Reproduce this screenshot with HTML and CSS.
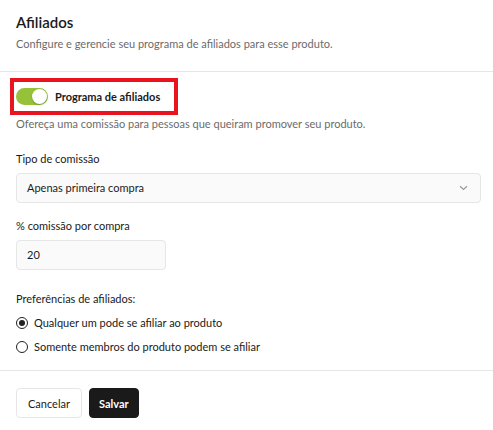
FILE: index.html
```html
<!DOCTYPE html>
<html lang="pt-BR">
    <head>
        <title>Afiliados</title>
        <link rel="stylesheet" href="styles.css">
    </head>
    <body>
        <div class="panel">
            <div class="panel-header">
                <h2>Afiliados</h2>
                <p class="muted">Configure e gerencie seu programa de afiliados para esse produto.</p>
            </div>

            <div class="panel-body">
                <label class="switch-box">
                    <span class="switch"><span class="knob"></span></span>
                    <span class="switch-label">Programa de afiliados</span>
                </label>
                <p class="muted">Ofereça uma comissão para pessoas que queiram promover seu produto.</p>

                <div class="field field-type">
                    <label class="field-label">Tipo de comissão</label>
                    <div class="select">
                        <span>Apenas primeira compra</span>
                        <svg width="9" height="6" viewBox="0 0 9 6"><path d="M1 1.2l3.5 3.3 3.5-3.3" fill="none" stroke="#9a9a9a" stroke-width="1.2"/></svg>
                    </div>
                </div>

                <div class="field field-percent">
                    <label class="field-label">% comissão por compra</label>
                    <div class="input">20</div>
                </div>

                <div class="field field-prefs">
                    <label class="field-label">Preferências de afiliados:</label>
                    <div class="radios">
                        <label class="radio"><span class="dot checked"></span>Qualquer um pode se afiliar ao produto</label>
                        <label class="radio"><span class="dot"></span>Somente membros do produto podem se afiliar</label>
                    </div>
                </div>
            </div>

            <div class="panel-footer">
                <button class="btn">Cancelar</button>
                <button class="btn btn-dark">Salvar</button>
            </div>
        </div>
    </body>
</html>
```
FILE: styles.css
```css
body {
    margin: 0;
    background: #fff;
    font-family: Lato, "Noto Sans", sans-serif;
    font-size: 11px;
    line-height: 16px;
    color: #1a1a1a;
}
.panel-header {
    padding: 12px 16px 19px 16px;
    border-bottom: 1px solid #e6e6e6;
}
.panel-header h2 {
    margin: 0 0 4px 0;
    font-size: 15px;
    line-height: 20px;
    font-weight: 600;
}
.muted {
    margin: 0;
    color: #6b6b6b;
}
.panel-body {
    padding: 6px 12px 15px 16px;
    border-bottom: 1px solid #e6e6e6;
}
.panel-body > .muted {
    margin-top: 1px;
}
.switch-box {
    display: inline-flex;
    align-items: center;
    gap: 7px;
    margin-left: -6px;
    padding: 6px 14px 6px 2px;
    border: 4px solid #e8141f;
}
.switch {
    width: 32px;
    height: 17px;
    background: #96c23a;
    border-radius: 9px;
    position: relative;
    display: inline-block;
}
.knob {
    position: absolute;
    right: 1px;
    top: 1px;
    width: 15px;
    height: 15px;
    border-radius: 50%;
    background: #fff;
    box-shadow: 0 1px 2px rgba(0,0,0,0.25);
}
.switch-label {
    font-weight: 700;
}
.field-type {
    margin-top: 19px;
}
.field-percent {
    margin-top: 15px;
}
.field-prefs {
    margin-top: 21px;
}
.field-label {
    display: block;
    margin-bottom: 6px;
}
.select, .input {
    display: flex;
    align-items: center;
    justify-content: space-between;
    height: 28px;
    padding: 0 12px 0 10px;
    background: #fafafa;
    border: 1px solid #e6e6e6;
    border-radius: 4px;
}
.input {
    width: 126px;
}
.field-prefs .field-label {
    margin-bottom: 8px;
}
.radios {
    display: flex;
    flex-direction: column;
    gap: 8px;
}
.radio {
    display: flex;
    align-items: center;
    gap: 6px;
}
.dot {
    width: 10px;
    height: 10px;
    border: 1px solid #222;
    border-radius: 50%;
    position: relative;
}
.dot.checked::after {
    content: "";
    position: absolute;
    left: 2px;
    top: 2px;
    width: 6px;
    height: 6px;
    border-radius: 50%;
    background: #222;
}
.panel-footer {
    display: flex;
    gap: 7px;
    padding: 17px 16px;
}
.btn {
    height: 30px;
    padding: 0 11px;
    font-family: inherit;
    font-size: 11px;
    color: #1a1a1a;
    background: #fff;
    border: 1px solid #e6e6e6;
    border-radius: 4px;
}
.btn-dark {
    padding: 0 9px;
    font-weight: 700;
    background: #1a1a1a;
    color: #fff;
    border-color: #1a1a1a;
}
```
